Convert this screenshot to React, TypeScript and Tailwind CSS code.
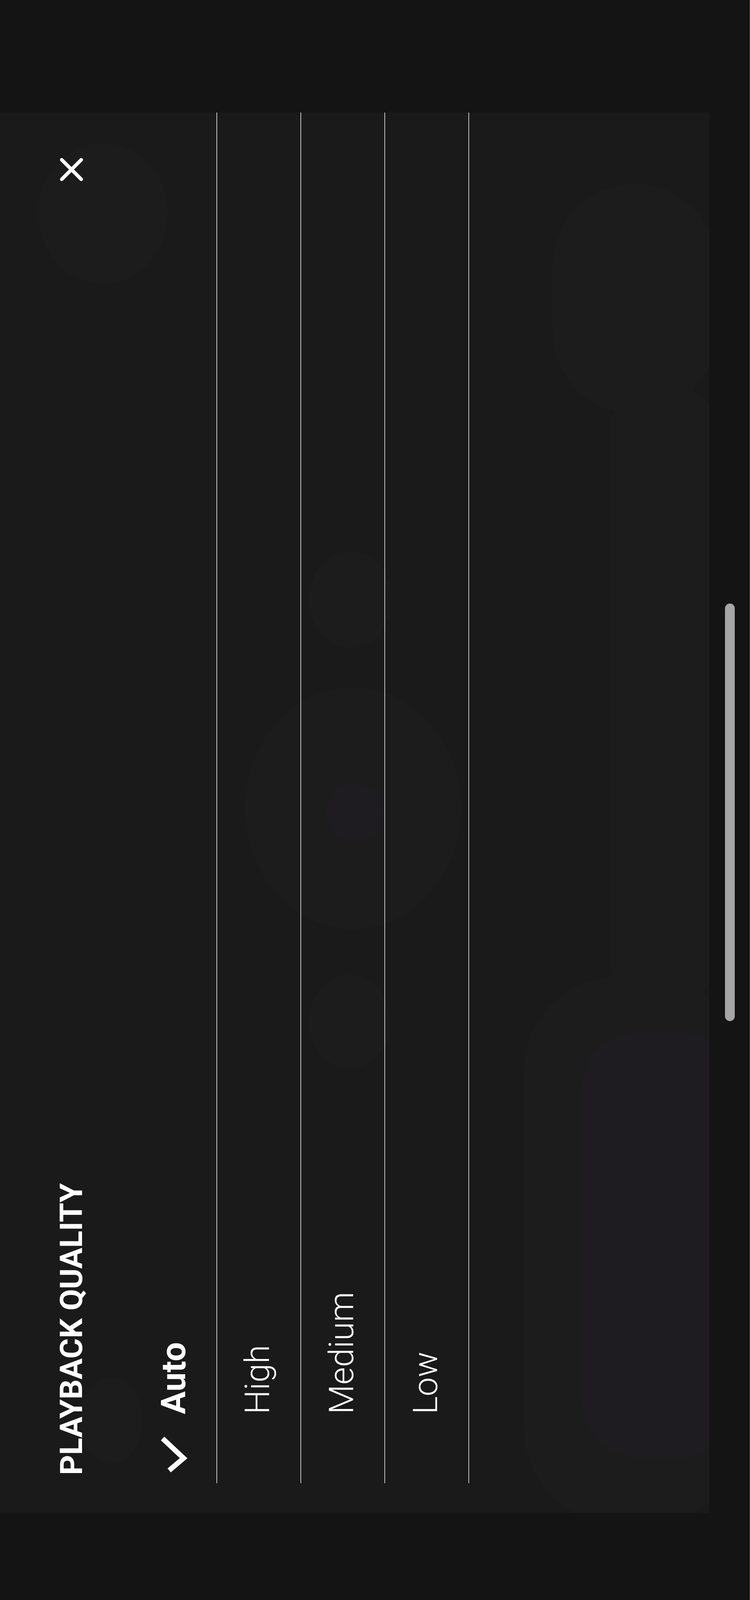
import { useState } from 'react';

type Quality = 'auto' | 'high' | 'medium' | 'low';

interface QualityOption {
  key: Quality;
  label: string;
}

const options: QualityOption[] = [
  { key: 'auto', label: 'Auto' },
  { key: 'high', label: 'High' },
  { key: 'medium', label: 'Medium' },
  { key: 'low', label: 'Low' },
];

function CloseIcon() {
  return (
    <svg width="60" height="60" viewBox="0 0 60 60" fill="none" stroke="#fff" strokeWidth="9" strokeLinecap="round">
      <path d="M5 5L55 55M55 5L5 55" />
    </svg>
  );
}

// check mark drawn already turned, like the rest of the sheet
function CheckIcon() {
  return (
    <svg width="72" height="95" viewBox="0 0 72 95" fill="none" stroke="#fff" strokeWidth="13" strokeLinecap="square" strokeLinejoin="miter">
      <polyline points="13,12 62,58 30,85" />
    </svg>
  );
}

/**
 * blurred artwork behind the sheet
 */
function Backdrop() {
  return (
    <svg className="pointer-events-none absolute inset-0" width="1816" height="3585" viewBox="0 0 1816 3585">
      <g fill="#1c1c1c">
        <ellipse cx="264" cy="259" rx="166" ry="180" />
        <ellipse cx="285" cy="3348" rx="80" ry="111" />
        <rect x="1415" y="182" width="420" height="590" rx="210" />
        <rect x="1560" y="700" width="280" height="1580" rx="120" />
        <ellipse cx="897" cy="1247" rx="106" ry="124" />
        <ellipse cx="904" cy="1781" rx="277" ry="310" />
        <ellipse cx="895" cy="2328" rx="105" ry="120" />
        <rect x="1342" y="2212" width="560" height="1400" rx="240" />
      </g>
      <g fill="#1e1c21">
        <ellipse cx="908" cy="1792" rx="74" ry="72" />
        <rect x="1488" y="2355" width="400" height="1089" rx="150" />
      </g>
    </svg>
  );
}

export default function App() {
  const [quality, setQuality] = useState<Quality>('auto');

  return (
    <div className="relative w-[1920px] h-[4162px] overflow-hidden bg-[#141414] border-r border-[#5c5c5c] font-['Roboto','Liberation_Sans',sans-serif] text-white">
      <div className="flex pt-[288px]">
        {/* sheet */}
        <section className="relative flex w-[1816px] h-[3585px] bg-[#1a1a1a]">
          <Backdrop />

          {/* header column */}
          <div className="relative z-10 w-[341px] h-[3509px] shrink-0">
            <div className="ml-[143px] w-[80px] h-full flex flex-col items-center justify-between pt-[116px] pb-[21px]">
              <button className="w-[60px] h-[60px] flex items-center justify-center">
                <CloseIcon />
              </button>
              <h2 className="[writing-mode:vertical-rl] rotate-180 text-[80px] leading-none font-bold whitespace-nowrap">
                PLAYBACK QUALITY
              </h2>
            </div>
          </div>

          {/* options */}
          {options.map((opt) => {
            const active = quality === opt.key;
            return (
              <button
                key={opt.key}
                onClick={() => setQuality(opt.key)}
                className="relative z-10 w-[215px] h-[3509px] shrink-0 border-r-2 border-[#c4c4c4] flex flex-col items-center justify-end pr-[7px] pb-[27px]"
              >
                <span
                  className={`[writing-mode:vertical-rl] rotate-180 text-[87px] leading-none whitespace-nowrap ${
                    active ? 'font-bold' : 'font-light'
                  }`}
                >
                  {opt.label}
                </span>
                <span className="mt-[55px] w-[72px] h-[95px] flex items-center justify-center">
                  {active && <CheckIcon />}
                </span>
              </button>
            );
          })}
        </section>

        {/* scroll track */}
        <aside className="flex-1 pl-[40px]">
          <div className="mt-[1257px] w-[25px] h-[1069px] rounded-full bg-[#a6a6a6]" />
        </aside>
      </div>
    </div>
  );
}
